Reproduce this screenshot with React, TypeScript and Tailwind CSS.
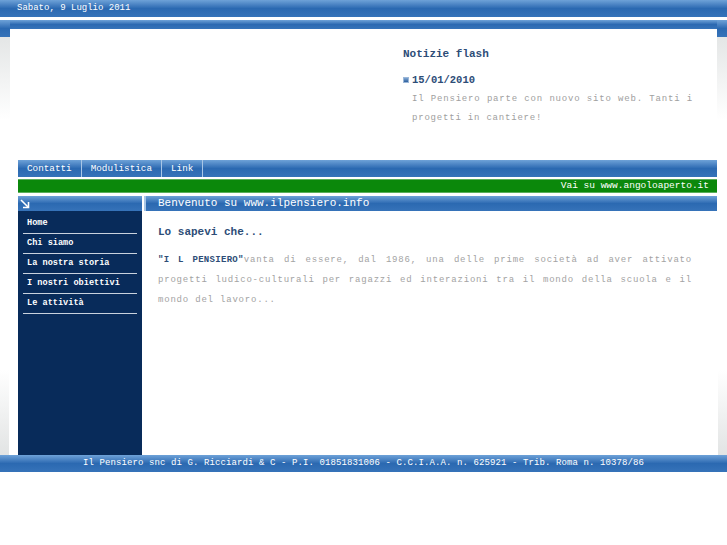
const bar = "bg-linear-to-b from-[#6ea2d8] via-[#2b69b1] to-[#3673b9]";
const mono = "font-['Liberation_Mono','Courier_New',monospace]";

const menu = ["Home", "Chi siamo", "La nostra storia", "I nostri obiettivi", "Le attività"];

function Arrow() {
  return (
    <svg width="10" height="10" viewBox="0 0 10 10" fill="none" stroke="white" strokeWidth="1.6">
      <path d="M1 1 L8.5 8.5" />
      <path d="M3 8.5 H8.5 V3" />
    </svg>
  );
}

export default function App() {
  return (
    <div className={`w-[727px] h-[545px] bg-white ${mono}`}>
      {/* date bar */}
      <div className={`${bar} h-[17px] flex items-center pl-[17px] text-[9px] text-white`}>
        Sabato, 9 Luglio 2011
      </div>

      {/* header */}
      <div className="mt-[3px] flex">
        <div className="w-[10px] flex flex-col">
          <div className={`${bar} h-[17px]`}></div>
          <div className="h-[83px] bg-linear-to-b from-[#e4e6e6] to-white"></div>
        </div>
        <div className="flex-1 flex flex-col">
          <div className={`${bar} h-[9px]`}></div>
          <div className="h-[93px] bg-white pl-[393px] pt-[18px]">
            <div className="w-[290px]">
              <div className="text-[11px] leading-[14px] font-bold text-[#2d4d77]">Notizie flash</div>
              <div className="mt-[12px] flex items-center gap-[3px] text-[10.5px] leading-[14px] font-bold text-[#2d4d77]">
                <span className="w-[6px] h-[6px] bg-linear-to-b from-[#7fa6d3] to-[#2d5f9c] border border-[#9bb7d8]"></span>
                15/01/2010
              </div>
              <p className="mt-[3px] pl-[9px] text-[9px] leading-[19px] tracking-[0.8px] text-[#a0a0a0] text-justify">
                Il Pensiero parte con nuovo sito web. Tanti i progetti in cantiere!
              </p>
            </div>
          </div>
        </div>
        <div className="w-[10px] flex flex-col">
          <div className={`${bar} h-[17px]`}></div>
          <div className="h-[83px] bg-linear-to-b from-[#e4e6e6] to-white"></div>
        </div>
      </div>

      {/* main */}
      <div className="mt-[38px] flex">
        <div className="w-[18px] flex flex-col justify-end">
          <div className="w-[9px] h-[85px] bg-linear-to-b from-white to-[#e2e4e4]"></div>
        </div>
        <div className="w-[699px] flex flex-col">
          <nav className={`${bar} h-[17px] flex text-[9.3px] text-white`}>
            {["Contatti", "Modulistica", "Link"].map((n) => (
              <div key={n} className="px-[9px] flex items-center border-r border-[#a8c6e6]">
                {n}
              </div>
            ))}
          </nav>
          <div className="mt-[2px] h-[14px] bg-[#0b880b] border-y border-[#5cae5c] flex items-center justify-end pr-[8px] text-[9.5px] text-white">
            Vai su www.angoloaperto.it
          </div>
          <div className="mt-[3px] flex gap-[2px]">
            <div className="w-[124px] flex flex-col">
              <div className={`${bar} h-[15px] flex items-center pl-[2px]`}>
                <Arrow />
              </div>
              <ul className="h-[244px] bg-[#082b5a] px-[5px] pt-[3px]">
                {menu.map((m) => (
                  <li
                    key={m}
                    className="h-[20px] flex items-center pl-[4px] border-b border-[#c9d2de] text-[8.6px] font-bold text-white"
                  >
                    {m}
                  </li>
                ))}
              </ul>
            </div>
            <div className="flex-1 flex flex-col">
              <div className={`${bar} h-[15px] flex items-center pl-[12px] text-[11px] text-white border-l-2 border-[#a8c6e6]`}>
                Benvenuto su www.ilpensiero.info
              </div>
              <div className="h-[244px] pl-[14px] pr-[25px] pt-[14px]">
                <div className="text-[11px] leading-[14px] font-bold text-[#2d4d77]">Lo sapevi che...</div>
                <p className="mt-[11px] text-[9px] leading-[20px] tracking-[0.8px] text-[#a3a3a3] text-justify">
                  <span className="font-bold text-[#2d4d77] tracking-[0.3px]">"I L PENSIERO"</span>vanta di essere, dal 1986,
                  una delle prime società ad aver attivato progetti ludico-culturali per ragazzi ed interazioni tra il
                  mondo della scuola e il mondo del lavoro...
                </p>
              </div>
            </div>
          </div>
        </div>
        <div className="w-[10px] flex flex-col justify-end items-end">
          <div className="w-[9px] h-[85px] bg-linear-to-b from-white to-[#e2e4e4]"></div>
        </div>
      </div>

      {/* footer */}
      <footer className={`${bar} h-[17px] flex items-center justify-center text-[9px] tracking-[0.1px] text-white`}>
        Il Pensiero snc di G. Ricciardi &amp; C - P.I. 01851831006 - C.C.I.A.A. n. 625921 - Trib. Roma n. 10378/86
      </footer>
    </div>
  );
}
